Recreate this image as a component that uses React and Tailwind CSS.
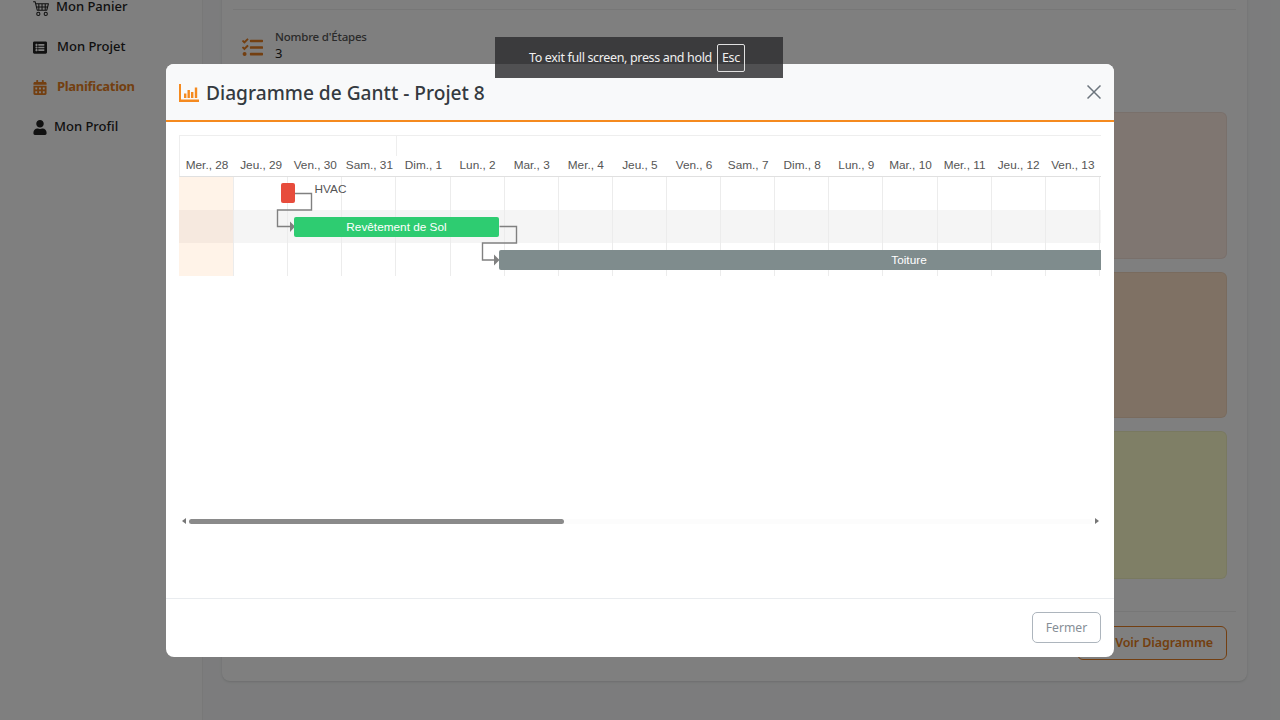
import { FaCalendarAlt, FaListAlt, FaTasks, FaUser } from "react-icons/fa";
import { BsCart4 } from "react-icons/bs";

const days = [
  "Mer., 28", "Jeu., 29", "Ven., 30", "Sam., 31", "Dim., 1", "Lun., 2", "Mar., 3", "Mer., 4", "Jeu., 5",
  "Ven., 6", "Sam., 7", "Dim., 8", "Lun., 9", "Mar., 10", "Mer., 11", "Jeu., 12", "Ven., 13"
];

const rows = ["bg-white", "bg-[#f5f5f5]", "bg-white"];
const todayCell = ["bg-[#fff3e8]", "bg-[#f6e9df]", "bg-[#fff3e8]"];

function NavItem({ icon, label, active, textClass }) {
  return (
    <div className={`flex h-10 items-center text-[13px] ${active ? "font-bold tracking-[-0.3px] text-[#e67e22]" : "font-medium text-[#222]"}`}>
      <span className="flex w-[14px] justify-center text-[15px]">{icon}</span>
      <span className={textClass}>{label}</span>
    </div>
  );
}

function Sidebar() {
  return (
    <aside className="-mt-[13px] w-[203px] shrink-0 border-r border-[#f0f0f0] bg-white pl-[33px]">
      <NavItem icon={<BsCart4 className="ml-[3px] shrink-0 text-[17px]" />} label="Mon Panier" textClass="ml-[9px]" />
      <NavItem icon={<FaListAlt />} label="Mon Projet" textClass="ml-[10px]" />
      <NavItem icon={<FaCalendarAlt />} label="Planification" active textClass="ml-[10px]" />
      <NavItem icon={<FaUser />} label="Mon Profil" textClass="ml-[7px]" />
    </aside>
  );
}

function Tint({ className }) {
  return <div className={`rounded-md border border-black/5 ${className}`} />;
}

function Background() {
  return (
    <div className="flex h-[720px] overflow-hidden bg-[#f8f9fa]">
      <Sidebar />
      <main className="flex-1 pl-[19px] pr-[33px]">
        <div className="-mt-[20px] flex h-[701px] flex-col rounded-lg bg-white px-[11px] pt-[29px] shadow-sm">
          <div className="flex items-start border-t border-[#eeeeee] pl-[9px] pt-[18px]">
            <FaTasks className="mt-[9px] text-[21px] text-[#e67e22]" />
            <div className="ml-[12px] text-[11.5px] leading-[17px]">
              <div className="font-medium tracking-[-0.2px] text-[#555]">Nombre d'Étapes</div>
              <div className="text-[13px] text-[#222]">3</div>
            </div>
          </div>
          <div className="mr-[9px] mt-[50px] flex flex-col gap-[13px]">
            <Tint className="h-[147px] bg-[#ffece2]" />
            <Tint className="h-[146px] bg-[#ffe3c8]" />
            <Tint className="h-[148px] bg-[#ffffcc]" />
          </div>
          <div className="mt-[32px] flex justify-end border-t border-[#eeeeee] pr-[9px] pt-[14px]">
            <button className="flex h-[34px] w-[150px] items-center justify-end rounded-md border border-[#e67e22] pr-[13px] text-[12.5px] font-semibold tracking-[-0.1px] text-[#e67e22]">
              Voir Diagramme
            </button>
          </div>
        </div>
      </main>
    </div>
  );
}

function Arrows() {
  return (
    <svg className="absolute left-[1px] top-[-0.5px]" width="921" height="100" fill="none">
      <path d="M114.5 17.5H131.5V34H97.5V50.5H111" stroke="#808080" strokeWidth="1.4" />
      <path d="M110 45.5L115 50.5L110 56Z" fill="#808080" />
      <path d="M319.5 50.5H336.5V67H302.5V84H315" stroke="#808080" strokeWidth="1.4" />
      <path d="M314 78.5L319.5 84L314 89.5Z" fill="#808080" />
    </svg>
  );
}

function Gantt() {
  return (
    <div className="relative h-[142px] w-[922px] overflow-hidden font-['Liberation_Sans',Arial,sans-serif] text-[11.8px] text-[#555]">
      <div className="h-[20px] border-l border-t border-[#eeeeee]">
        <div className="ml-[216px] h-[20px] border-l border-[#eeeeee]" />
      </div>
      <div className="grid h-[21.5px] grid-cols-[repeat(17,54.12px)] border-b border-[#e0e0e0] border-l border-l-[#eeeeee]">
        {days.map((d) => (
          <div key={d} className="whitespace-nowrap text-center leading-[20px]">{d}</div>
        ))}
      </div>
      <div className="relative">
        {rows.map((bg, r) => (
          <div key={r} className={`grid h-[33.3px] grid-cols-[55.12px_repeat(16,54.12px)] ${bg}`}>
            {days.map((d, i) => (
              <div key={d} className={`border-r border-[#ececec] ${i === 0 ? todayCell[r] : ""}`} />
            ))}
          </div>
        ))}
        <Arrows />
        <div className="absolute left-[102px] top-[6.5px] h-[20px] w-[14px] rounded-[2px] bg-[#e74c3c]" />
        <div className="absolute left-[135.5px] top-[5.5px] leading-[15px]">HVAC</div>
        <div className="absolute left-[115px] top-[40.5px] h-[20px] w-[205px] rounded-[2px] bg-[#2ecc71] text-center leading-[20px] text-white">
          Revêtement de Sol
        </div>
        <div className="absolute left-[320px] top-[73.5px] h-[20px] w-[820px] rounded-[2px] bg-[#7f8c8d] text-center leading-[20px] text-white">
          Toiture
        </div>
      </div>
    </div>
  );
}

function Scrollbar() {
  return (
    <div className="mt-[240px] flex h-[8px] w-[922px] items-center">
      <svg width="10" height="8" className="shrink-0"><path d="M7 1L3 4L7 7Z" fill="#777" /></svg>
      <div className="h-[5px] flex-1 bg-[#fcfcfc]">
        <div className="h-[5px] w-[375px] rounded-full bg-[#8a8a8a]" />
      </div>
      <svg width="9" height="8" className="shrink-0"><path d="M3 1L7 4L3 7Z" fill="#777" /></svg>
    </div>
  );
}

function Modal() {
  return (
    <div className="absolute left-[166px] top-[64px] flex h-[593px] w-[948px] flex-col overflow-hidden rounded-lg bg-white">
      <div className="flex h-[58px] shrink-0 items-center border-b-2 border-[#f58a1f] bg-[#f8f9fa] pl-[13px] pr-[13px]">
        <svg width="20" height="18" viewBox="0 0 20 18" className="mt-[2px] shrink-0" fill="#f58a1f">
          <path d="M0 0h2v15.5h18V18H0z" />
          <rect x="5" y="9.5" width="2.4" height="4.5" />
          <rect x="8.5" y="6" width="2.4" height="8" />
          <rect x="12" y="8" width="2.4" height="6" />
          <rect x="15.8" y="3.5" width="2.4" height="10.5" />
        </svg>
        <h2 className="ml-[7px] mt-[2px] text-[19.15px] font-medium text-[#343a40]">Diagramme de Gantt - Projet 8</h2>
        <svg width="14" height="14" viewBox="0 0 14 14" className="ml-auto" stroke="#6c757d" strokeWidth="1.5">
          <path d="M0.5 0.5L13.5 13.5M13.5 0.5L0.5 13.5" />
        </svg>
      </div>
      <div className="flex-1 pl-[13px] pt-[13px]">
        <Gantt />
        <Scrollbar />
      </div>
      <div className="flex h-[59px] shrink-0 items-center justify-end border-t border-[#e9ecef] pb-[2px] pr-[13px]">
        <button className="h-[31px] w-[69px] rounded-[5px] border border-[#adb5bd] pt-[2px] text-[12.2px] text-[#868e96]">Fermer</button>
      </div>
    </div>
  );
}

export default function App() {
  return (
    <div className="relative h-[720px] overflow-hidden font-['Noto_Sans',sans-serif]">
      <Background />
      <div className="absolute inset-0 bg-black/50" />
      <Modal />
      <div className="absolute left-[495px] top-[37px] flex h-[41px] w-[288px] items-center bg-[rgba(46,46,48,0.83)] pl-[34px] text-[12.5px] tracking-[-0.35px] text-[#f0f0f0]">
        <span className="mt-[2px]">To exit full screen, press and hold</span>
        <span className="ml-[5px] flex h-[28px] w-[28px] items-center justify-center rounded-[2px] border border-[#e0e0e0] pt-[2px]">Esc</span>
      </div>
    </div>
  );
}
